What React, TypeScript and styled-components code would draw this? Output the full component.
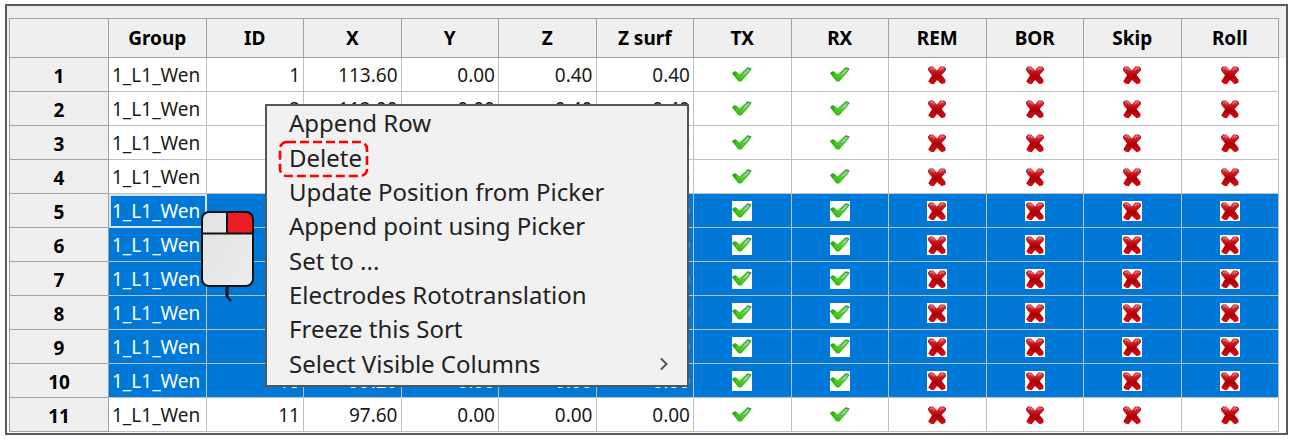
import React, { useState } from "react";
import styled, { createGlobalStyle } from "styled-components";

const GlobalStyle = createGlobalStyle`
  body {
    margin: 0;
    background: #fff;
    font-family: "Noto Sans", "Open Sans", sans-serif;
    color: #1a1a1a;
  }
`;

const Page = styled.main`
  padding: 4px 5px;
`;

const Frame = styled.section`
  position: relative;
  padding: 12px 7px 1px 2px;
  border: 2px solid #5a5a5a;
  background: linear-gradient(#efefef 52px, #fff 52px);
`;

const Grid = styled.table`
  width: 100%;
  table-layout: fixed;
  border-collapse: separate;
  border-spacing: 0;
  font-size: 19px;
  line-height: 24px;
`;

const NumberCol = styled.col`
  width: 100px;
`;

const ColumnHead = styled.th`
  box-sizing: border-box;
  height: 40px;
  padding: 0;
  border: solid #a0a0a0;
  border-width: 1px 1px 1px 0;
  background: #efefef;
  color: #000;
  font-weight: 700;

  &:first-child {
    border-left-width: 1px;
  }
`;

const RowHead = styled.th`
  box-sizing: border-box;
  height: 34px;
  padding: 2px 0 0;
  border: solid #a0a0a0;
  border-width: 0 1px 1px 1px;
  background: #efefef;
  color: #000;
  font-weight: 700;
`;

const Row = styled.tr<{ $selected: boolean }>`
  background: ${(p) => (p.$selected ? "#0078d7" : "#fff")};
  color: ${(p) => (p.$selected ? "#fff" : "#1a1a1a")};
`;

const Cell = styled.td<{ $align?: "left" | "right" | "center"; $current?: boolean }>`
  box-sizing: border-box;
  height: 34px;
  padding: ${(p) => (p.$align === "center" ? "0 0 2px" : "0 3px")};
  border: solid #c0c0c0;
  border-width: 0 1px 1px 0;
  overflow: hidden;
  white-space: nowrap;
  text-align: ${(p) => p.$align ?? "right"};
  outline: ${(p) => (p.$current ? "2px solid #d5e3ee" : "none")};
  outline-offset: -2px;
`;

const Toggle = styled.label<{ $selected: boolean }>`
  display: inline-grid;
  width: 20px;
  height: 20px;
  vertical-align: middle;
  background: ${(p) => (p.$selected ? "#fff" : "transparent")};

  > * {
    grid-area: 1 / 1;
  }
`;

const ToggleInput = styled.input`
  width: 20px;
  height: 20px;
  margin: 0;
  opacity: 0;
`;

const Menu = styled.div`
  position: absolute;
  top: 98px;
  left: 258px;
  box-sizing: border-box;
  width: 424px;
  height: 283px;
  padding-bottom: 4px;
  border: 2px solid #555;
  background: #f1f1f1;
  display: grid;
  grid-auto-rows: 1fr;
`;

const MenuItem = styled.button`
  display: flex;
  align-items: center;
  justify-content: space-between;
  min-height: 0;
  padding: 0 18px 0 22px;
  border: 0;
  background: transparent;
  color: #222;
  font: 24px/32px "Noto Sans", "Open Sans", sans-serif;
  text-align: left;
`;

const Highlight = styled.svg`
  position: absolute;
  top: 34px;
  left: 11px;
  width: 92px;
  height: 38px;
  pointer-events: none;
`;

const Pointer = styled.svg`
  position: absolute;
  top: 204px;
  left: 193px;
  width: 56px;
  height: 96px;
`;

const Definitions = styled.svg`
  display: block;
  width: 0;
  height: 0;
`;

function Tick() {
  return (
    <svg width="20" height="20" viewBox="0 0 20 20" aria-hidden="true">
      <path
        d="M0 8.200Q1.500 6.200 3.600 6.200L7.600 9.200 15.600 2.200Q17.500 2 19.700 3.800L16.500 8.500 9.600 16.200Q7.500 17 6 16Z"
        fill="url(#tickFill)"
      />
      <path d="M10.500 10 16.200 3.800 18 4.600 14 8.800Z" fill="#b5e4ac" opacity="0.75" />
      <path d="M0 8.200Q1.500 6.200 3.600 6.200L5 7.300 3.200 12Z" fill="#2c9a18" opacity="0.6" />
    </svg>
  );
}

function Cross() {
  return (
    <svg width="20" height="20" viewBox="0 0 20 20" aria-hidden="true">
      <path
        d="M1.400 3.200Q3.500 0.600 6.200 1.400L10 5.600 13.200 1.400Q16 0.600 18.600 3.200L18.400 6 14.600 10 18.600 15 18.200 18 14.600 19.200 10 15 6.800 19.200 3.800 18.800 1.200 16.400 5 10.200 1.600 6.200Z"
        fill="url(#crossFill)"
      />
      <path d="M3 3.800 5.400 2.800 7.600 5.400M12.800 5.400 14.600 2.800 17 3.800" fill="none" stroke="#e88a8c" strokeWidth="1.4" opacity="0.7" />
      <path d="M1.600 5.400 1.500 3.200 3.400 1.600M16.600 1.600 18.500 3.200 18.400 5.600" fill="none" stroke="#6b3a3c" strokeWidth="1" />
    </svg>
  );
}

function IconFills() {
  return (
    <Definitions aria-hidden="true">
      <defs>
        <linearGradient id="tickFill" x1="0" y1="1" x2="1" y2="0">
          <stop offset="0" stopColor="#2ea312" />
          <stop offset="0.45" stopColor="#4fce26" />
          <stop offset="0.75" stopColor="#55b848" />
          <stop offset="1" stopColor="#2b8038" />
        </linearGradient>
        <linearGradient id="crossFill" x1="0" y1="0" x2="0" y2="1">
          <stop offset="0" stopColor="#c9484c" />
          <stop offset="0.3" stopColor="#cf141c" />
          <stop offset="0.55" stopColor="#a80006" />
          <stop offset="1" stopColor="#de0c16" />
        </linearGradient>
      </defs>
    </Definitions>
  );
}

const valueColumns = ["ID", "X", "Y", "Z", "Z surf"];
const flagColumns = ["TX", "RX", "REM", "BOR", "Skip", "Roll"];
const values = [
  ["113.60", "0.00", "0.40", "0.40"],
  ["112.00", "0.00", "0.40", "0.40"],
  ["110.40", "0.00", "0.40", "0.40"],
  ["108.80", "0.00", "0.40", "0.40"],
  ["107.20", "0.00", "0.00", "0.00"],
  ["105.60", "0.00", "0.00", "0.00"],
  ["104.00", "0.00", "0.00", "0.00"],
  ["102.40", "0.00", "0.00", "0.00"],
  ["100.80", "0.00", "0.00", "0.00"],
  ["99.20", "0.00", "0.00", "0.00"],
  ["97.60", "0.00", "0.00", "0.00"],
];
const menuItems = [
  "Append Row",
  "Delete",
  "Update Position from Picker",
  "Append point using Picker",
  "Set to ...",
  "Electrodes Rototranslation",
  "Freeze this Sort",
  "Select Visible Columns",
];

function Flag({ name, initial, selected }: { name: string; initial: boolean; selected: boolean }) {
  const [on, setOn] = useState(initial);
  return (
    <Toggle $selected={selected}>
      {on ? <Tick /> : <Cross />}
      <ToggleInput type="checkbox" aria-label={name} checked={on} onChange={() => setOn(!on)} />
    </Toggle>
  );
}

export default function App() {
  return (
    <Page>
      <GlobalStyle />
      <IconFills />
      <Frame>
        <Grid>
          <colgroup>
            <NumberCol />
          </colgroup>
          <thead>
            <tr>
              <ColumnHead />
              {["Group", ...valueColumns, ...flagColumns].map((name) => (
                <ColumnHead key={name} scope="col">{name}</ColumnHead>
              ))}
            </tr>
          </thead>
          <tbody>
            {values.map((row, i) => {
              const n = i + 1;
              const selected = n >= 5 && n <= 10;
              return (
                <Row key={n} $selected={selected}>
                  <RowHead scope="row">{n}</RowHead>
                  <Cell $align="left" $current={n === 5}>1_L1_Wen</Cell>
                  <Cell>{n}</Cell>
                  {row.map((value, c) => (
                    <Cell key={c}>{value}</Cell>
                  ))}
                  {flagColumns.map((name, c) => (
                    <Cell key={name} $align="center">
                      <Flag name={`${name} ${n}`} initial={c < 2} selected={selected} />
                    </Cell>
                  ))}
                </Row>
              );
            })}
          </tbody>
        </Grid>

        <Menu role="menu">
          {menuItems.map((item, i) => (
            <MenuItem key={item} type="button" role="menuitem">
              {item}
              {i === menuItems.length - 1 && (
                <svg width="10" height="14" viewBox="0 0 10 14" aria-hidden="true">
                  <path d="M2 1.5 7.5 7 2 12.5" fill="none" stroke="#555" strokeWidth="2" />
                </svg>
              )}
            </MenuItem>
          ))}
          <Highlight viewBox="0 0 92 38" aria-hidden="true">
            <rect x="2" y="2" width="87" height="34" rx="7" fill="none" stroke="#f00" strokeWidth="2.6" strokeDasharray="9 4" />
          </Highlight>
        </Menu>

        <Pointer viewBox="0 0 56 96" aria-hidden="true">
          <defs>
            <linearGradient id="mouseBody" x1="0" y1="0" x2="1" y2="1">
              <stop offset="0" stopColor="#e2e2e2" />
              <stop offset="1" stopColor="#ececec" />
            </linearGradient>
          </defs>
          <path d="M27 76v11" fill="none" stroke="#111" strokeWidth="3" />
          <path d="M26.500 86l4.500 5" fill="none" stroke="#111" strokeWidth="2" />
          <rect x="2" y="2" width="51" height="74" rx="7" fill="url(#mouseBody)" />
          <path d="M27 2h19a7 7 0 0 1 7 7v14H27z" fill="#ed1c24" />
          <rect x="2" y="2" width="51" height="74" rx="7" fill="none" stroke="#111" strokeWidth="2" />
          <path d="M2 23.500h51M27 2v21" fill="none" stroke="#111" strokeWidth="2" />
        </Pointer>
      </Frame>
    </Page>
  );
}
